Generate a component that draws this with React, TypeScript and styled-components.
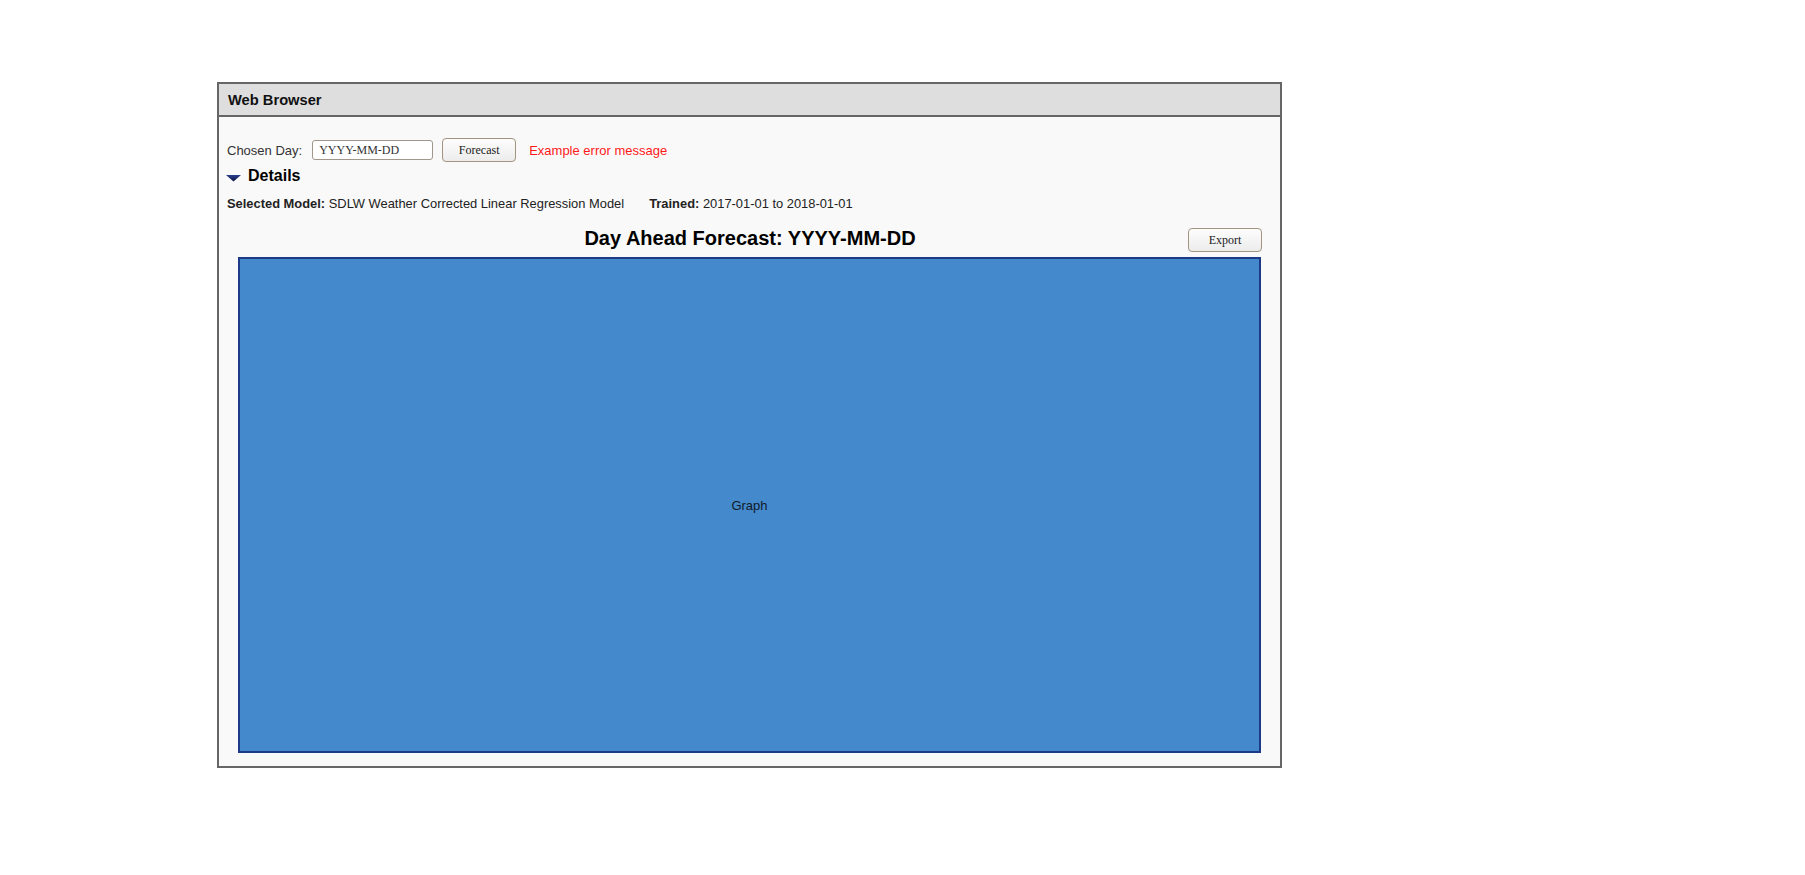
import React from "react";
import styled, { createGlobalStyle } from "styled-components";

const GlobalStyle = createGlobalStyle`
  html, body {
    margin: 0;
    padding: 0;
    background: #ffffff;
    font-family: "Liberation Sans", Arial, sans-serif;
  }
`;

const Page = styled.div`
  padding: 82px 0 0 217px;
`;

const Window = styled.div`
  width: 1065px;
  height: 686px;
  box-sizing: border-box;
  border: 2px solid #666666;
  background: #f9f9f9;
  display: flex;
  flex-direction: column;
`;

const TitleBar = styled.div`
  height: 31px;
  background: #dedede;
  border-bottom: 2px solid #666666;
  display: flex;
  align-items: center;
  padding-left: 9px;
  font-weight: bold;
  font-size: 14.7px;
  color: #111111;
`;

const Body = styled.div`
  flex: 1;
  display: flex;
  flex-direction: column;
  padding: 21px 0 13px 8px;
`;

const ControlRow = styled.div`
  height: 24px;
  display: flex;
  align-items: center;
`;

const Label = styled.span`
  font-size: 13px;
  color: #333333;
  margin-right: 10px;
`;

const DateInput = styled.input`
  width: 121px;
  height: 20px;
  box-sizing: border-box;
  border: 1px solid #a0968a;
  border-radius: 3px;
  background: #ffffff;
  padding: 0 0 0 6px;
  font-family: "Liberation Serif", "Times New Roman", serif;
  font-size: 12px;
  color: #333333;
  outline: none;
  margin-right: 9px;
  &::placeholder {
    color: #333333;
  }
`;

const Button = styled.button`
  width: 74px;
  height: 24px;
  box-sizing: border-box;
  border: 1px solid #a39482;
  border-radius: 4px;
  background: linear-gradient(#fdfdfd, #ececec);
  font-family: "Liberation Serif", "Times New Roman", serif;
  font-size: 12px;
  color: #222222;
  padding: 0;
  cursor: pointer;
`;

const ErrorText = styled.span`
  font-size: 13px;
  color: #ff1a1a;
  margin-left: 13px;
`;

const DetailsRow = styled.div`
  margin-top: 4px;
  height: 20px;
  display: flex;
  align-items: center;
  gap: 7px;
  margin-left: -1px;
`;

const Triangle = styled.svg`
  width: 15px;
  height: 7px;
  margin-top: 4px;
`;

const DetailsTitle = styled.span`
  font-size: 16px;
  font-weight: bold;
  color: #000000;
`;

const ModelLine = styled.div`
  margin-top: 9px;
  height: 16px;
  display: flex;
  align-items: center;
  gap: 25px;
  font-size: 12.9px;
  color: #222222;
`;

const Field = styled.span`
  white-space: pre;
`;

const Strong = styled.b`
  color: #222222;
`;

const ChartHeader = styled.div`
  margin: 17px 18px 0 11px;
  height: 24px;
  display: grid;
  grid-template-columns: 1fr auto 1fr;
  align-items: center;
`;

const ChartTitle = styled.h2`
  grid-column: 2;
  margin: 0;
  font-size: 20px;
  font-weight: bold;
  color: #000000;
  transform: translateY(-2px);
`;

const ExportWrap = styled.div`
  grid-column: 3;
  justify-self: end;
`;

const Graph = styled.div`
  margin: 5px 19px 0 11px;
  height: 496px;
  box-sizing: border-box;
  border: 2px solid #1c3a87;
  background: #4489cc;
  display: flex;
  align-items: center;
  justify-content: center;
  font-size: 13px;
  color: #111a2a;
`;

export default function App() {
  return (
    <>
      <GlobalStyle />
      <Page>
        <Window>
          <TitleBar>Web Browser</TitleBar>
          <Body>
            <ControlRow>
              <Label>Chosen Day:</Label>
              <DateInput placeholder="YYYY-MM-DD" />
              <Button>Forecast</Button>
              <ErrorText>Example error message</ErrorText>
            </ControlRow>
            <DetailsRow>
              <Triangle viewBox="0 0 15 7">
                <defs>
                  <linearGradient id="tri" x1="0" y1="0" x2="0" y2="1">
                    <stop offset="0" stopColor="#2a3f8f" />
                    <stop offset="1" stopColor="#0c1440" />
                  </linearGradient>
                </defs>
                <polygon points="0,0 15,0 7.5,6.5" fill="url(#tri)" />
              </Triangle>
              <DetailsTitle>Details</DetailsTitle>
            </DetailsRow>
            <ModelLine>
              <Field>
                <Strong>Selected Model:</Strong> SDLW Weather Corrected Linear Regression Model
              </Field>
              <Field>
                <Strong>Trained:</Strong> 2017-01-01 to 2018-01-01
              </Field>
            </ModelLine>
            <ChartHeader>
              <ChartTitle>Day Ahead Forecast: YYYY-MM-DD</ChartTitle>
              <ExportWrap>
                <Button>Export</Button>
              </ExportWrap>
            </ChartHeader>
            <Graph>Graph</Graph>
          </Body>
        </Window>
      </Page>
    </>
  );
}
